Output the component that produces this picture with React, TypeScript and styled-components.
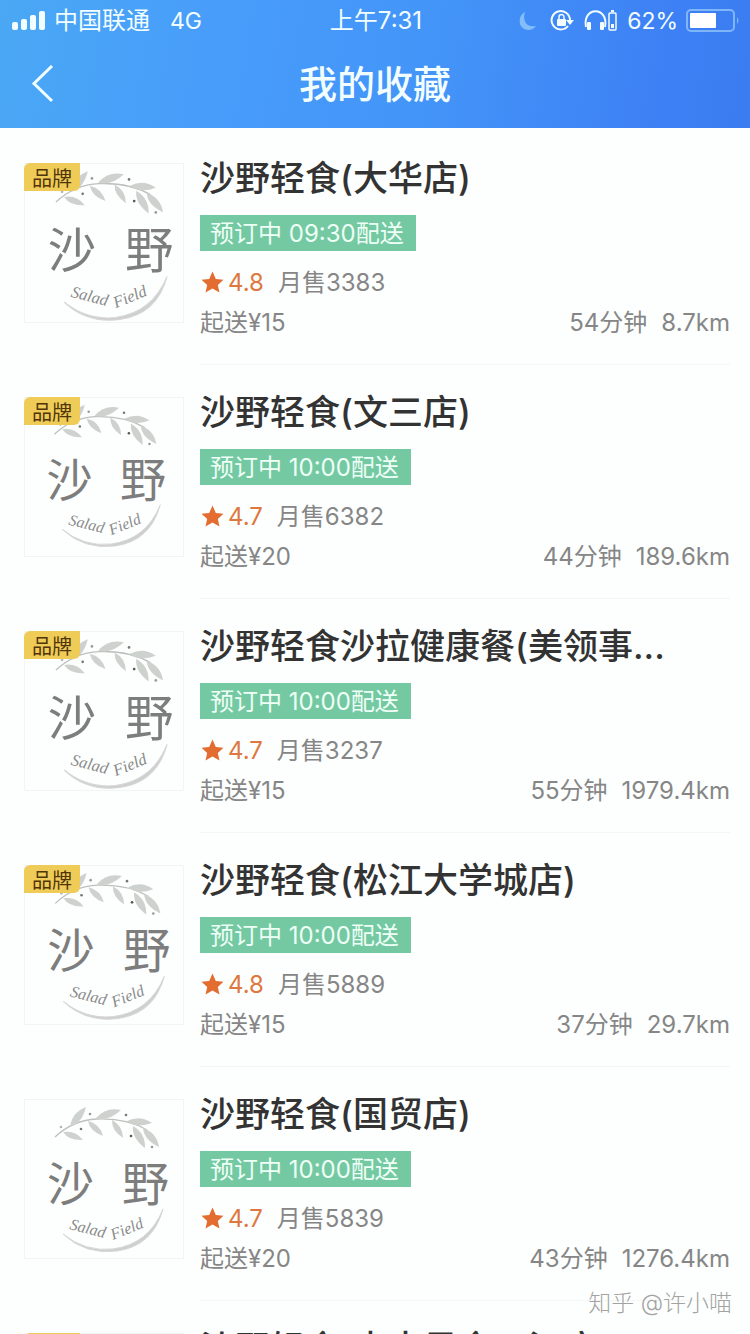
import React from "react";
import styled, { createGlobalStyle } from "styled-components";

const GlobalStyle = createGlobalStyle`
  * { box-sizing: border-box; }
  html, body, #root { height: 100%; }
  body {
    margin: 0;
    background: #fdfffe;
    font-family: Inter, "Noto Sans CJK SC", sans-serif;
    color: #333;
  }
`;

const Screen = styled.div`
  position: relative;
  height: 100%;
  overflow: hidden;
`;

const Header = styled.header`
  background: linear-gradient(100deg, #4aa8f4 0%, #489dfa 28%, #4394f8 58%, #3d80f5 88%, #3b7df0 100%);
  color: #f2fdff;
`;

const StatusBar = styled.div`
  display: grid;
  grid-template-columns: 1fr auto 1fr;
  align-items: center;
  height: 40px;
  padding: 2px 10px 0 12px;
  font-size: 24px;
  line-height: 32px;
`;

const StatusGroup = styled.div<{ $end?: boolean }>`
  display: flex;
  align-items: center;
  gap: 8px;
  justify-content: ${(p) => (p.$end ? "flex-end" : "flex-start")};
`;

const Network = styled.span`
  margin-left: 12px;
  font-size: 23px;
`;

const Percent = styled.span`
  font-size: 23px;
`;

const TitleBar = styled.div`
  display: grid;
  grid-template-columns: 72px 1fr 72px;
  align-items: center;
  height: 88px;
`;

const BackButton = styled.button`
  display: flex;
  align-items: center;
  height: 88px;
  padding: 0 0 0 30px;
  border: 0;
  background: none;
  color: inherit;
`;

const PageTitle = styled.h1`
  margin: 0;
  text-align: center;
  font-size: 38px;
  line-height: 48px;
  font-weight: 500;
`;

const List = styled.ul`
  margin: 0;
  padding: 3px 0 0;
  list-style: none;
`;

const Row = styled.li`
  display: flex;
  gap: 16px;
  height: 234px;
  padding: 32px 20px 0 24px;
`;

const Thumb = styled.div`
  position: relative;
  flex: none;
  width: 160px;
  height: 160px;
  border: 1px solid #f3f5f4;
`;

const BrandTag = styled.span`
  position: absolute;
  top: -1px;
  left: -1px;
  width: 56px;
  height: 28px;
  padding-top: 2px;
  border-radius: 6px 0 6px 0;
  background: #efcb58;
  color: #4f3508;
  font-size: 20px;
  line-height: 28px;
  text-align: center;
`;

const Info = styled.div`
  display: flex;
  flex: 1;
  flex-direction: column;
  align-items: flex-start;
  min-width: 0;
  border-bottom: 1px solid #f4f5f5;
`;

const ShopName = styled.h2`
  margin: -11px 0 0;
  font-size: 35px;
  line-height: 52px;
  font-weight: 500;
  white-space: nowrap;
`;

const Booking = styled.span`
  height: 36px;
  margin-top: 11px;
  padding: 2px 12px 0 10px;
  background: #74c9a3;
  color: #eefff6;
  font-size: 24px;
  line-height: 34px;
`;

const Rating = styled.div`
  display: flex;
  align-items: center;
  margin-top: 16px;
  color: #868686;
  font-size: 24px;
  line-height: 32px;
`;

const Score = styled.span`
  margin: 0 14px 0 3px;
  color: #dd7840;
`;

const Meta = styled.div`
  display: flex;
  width: 100%;
  justify-content: space-between;
  margin-top: 8px;
  color: #868686;
  font-size: 24px;
  line-height: 32px;
`;

const Distance = styled.span`
  margin-left: 14px;
`;

const Watermark = styled.div`
  position: absolute;
  right: 18px;
  bottom: 15px;
  color: #a3a3a3;
  font-size: 23px;
  line-height: 32px;
  font-weight: 300;
  text-shadow: 1px 1px 0 #fff;
`;

/* Each leaf runs from its base (x1, y1) to its tip (x2, y2). */
const leaves = [
  [45, 27, 61, 7],
  [38, 32, 58, 40],
  [71, 18, 96, 10],
  [63, 21, 78, 36],
  [87, 20, 98, 38],
  [102, 21, 127, 23],
  [108, 26, 120, 48],
  [118, 28, 134, 47],
];

function leafPath([x1, y1, x2, y2]: number[]) {
  const dx = x2 - x1;
  const dy = y2 - y1;
  const a = `${x1 + dx * 0.4 - dy * 0.28} ${y1 + dy * 0.4 + dx * 0.28}`;
  const b = `${x1 + dx * 0.5 + dy * 0.3} ${y1 + dy * 0.5 - dx * 0.3}`;
  return `M${x1} ${y1}Q${a} ${x2} ${y2}Q${b} ${x1} ${y1}Z`;
}

const dots = [
  [36, 27, "#b5b5b5"],
  [56, 29, "#777"],
  [65, 14, "#999"],
  [101, 15, "#777"],
  [106, 36, "#555"],
  [127, 47, "#999"],
] as const;

function ShopLogo({ scale }: { scale: number }) {
  return (
    <svg width="158" height="158" viewBox="0 0 158 158" role="img" aria-label="沙野 Salad Field">
      <g transform={`scale(${scale})`}>
        <path d="M30 37Q48 20 72 19Q102 18 122 30" fill="none" stroke="#bcc1be" strokeWidth="1.3" />
        {leaves.map((l, i) => (
          <path key={i} d={leafPath(l)} fill="#cdd2cf" />
        ))}
        {dots.map(([x, y, c], i) => (
          <circle key={i} cx={x} cy={y} r="1.3" fill={c} />
        ))}
        <g fill="#7d7d7d" fontFamily='"Liberation Serif", "Noto Sans CJK SC", serif' fontSize="47">
          <text x="22" y="101">沙</text>
          <text x="97" y="101">野</text>
        </g>
        <path d="M38 134Q60 152 88 149Q124 144 138 109Q128 146 92 151Q60 155 38 134Z" fill="#cfcfcf" stroke="#d6d6d6" />
        <g fill="#8a8a8a" fontFamily='"Liberation Serif", serif' fontStyle="italic" fontSize="16">
          <text transform="translate(44 129) rotate(14)">Salad</text>
          <text transform="translate(88 140) rotate(-22)">Field</text>
        </g>
      </g>
    </svg>
  );
}

function StarIcon() {
  return (
    <svg width="25" height="24" viewBox="0 0 25 24" aria-hidden="true">
      <path d="M12.5 .5L15.8 8L23.5 8.8L17.8 14L19.5 21.5L12.5 17.6L5.5 21.5L7.2 14L1.5 8.8L9.2 8Z" fill="#e36c31" />
    </svg>
  );
}

const shops = [
  { name: "沙野轻食(大华店)", time: "09:30", score: "4.8", sold: 3383, min: 15, eta: 54, km: "8.7", brand: true, scale: 1.03 },
  { name: "沙野轻食(文三店)", time: "10:00", score: "4.7", sold: 6382, min: 20, eta: 44, km: "189.6", brand: true, scale: 0.98 },
  { name: "沙野轻食沙拉健康餐(美领事...", time: "10:00", score: "4.7", sold: 3237, min: 15, eta: 55, km: "1979.4", brand: true, scale: 1.03 },
  { name: "沙野轻食(松江大学城店)", time: "10:00", score: "4.8", sold: 5889, min: 15, eta: 37, km: "29.7", brand: true, scale: 1.01 },
  { name: "沙野轻食(国贸店)", time: "10:00", score: "4.7", sold: 5839, min: 20, eta: 43, km: "1276.4", brand: false, scale: 1 },
  { name: "沙野轻食(中大星食一江店)", time: "10:00", score: "4.7", sold: 3120, min: 20, eta: 45, km: "190.2", brand: true, scale: 1 },
];

export default function App() {
  return (
    <Screen>
      <GlobalStyle />
      <Header>
        <StatusBar>
          <StatusGroup>
            <svg width="34" height="20" viewBox="0 0 34 20" fill="currentColor" aria-hidden="true">
              <rect x="0" y="11" width="6" height="8" rx="2" />
              <rect x="9" y="8" width="6" height="11" rx="2" />
              <rect x="18" y="4" width="6" height="15" rx="2" />
              <rect x="27" y="0" width="6" height="19" rx="2" />
            </svg>
            <span>中国联通</span>
            <Network>4G</Network>
          </StatusGroup>
          <span>上午7:31</span>
          <StatusGroup $end>
            <svg width="102" height="24" viewBox="0 0 102 24" fill="none" stroke="currentColor" aria-hidden="true">
              <path d="M8 3C5 12 10 19 19 17C15 23 5 22 3 15C2 9 4 5 8 3Z" fill="#83bdfa" stroke="none" />
              <path d="M51 17A9.2 9.2 0 1 1 53 11" strokeWidth="2" />
              <path d="M49 11H57L53 16Z" fill="currentColor" stroke="none" />
              <rect x="40" y="10" width="9" height="7" rx="1" fill="currentColor" stroke="none" />
              <path d="M42 10V8A2.5 2.5 0 0 1 47 8V10" strokeWidth="1.5" />
              <path d="M69 18C65 -3 92 -3 88 18" strokeWidth="2" />
              <rect x="70" y="13" width="4" height="8" rx="1" fill="currentColor" stroke="none" />
              <rect x="83" y="13" width="4" height="8" rx="1" fill="currentColor" stroke="none" />
              <rect x="92" y="4" width="7" height="17" rx="1" strokeWidth="1.5" />
              <path d="M94 2H97" strokeWidth="2" />
              <rect x="94" y="15" width="3" height="4" fill="currentColor" stroke="none" />
            </svg>
            <Percent>62%</Percent>
            <svg width="54" height="24" viewBox="0 0 54 24" aria-hidden="true">
              <rect x="1" y="1" width="47" height="21" rx="4" fill="none" stroke="#7fb6fa" strokeWidth="2" />
              <rect x="4" y="4" width="26" height="15" rx="1" fill="#fff" />
              <path d="M51 8Q54 11.5 51 15Z" fill="#7fb6fa" />
            </svg>
          </StatusGroup>
        </StatusBar>
        <TitleBar>
          <BackButton aria-label="返回">
            <svg width="24" height="38" viewBox="0 0 24 38" fill="none" stroke="currentColor" strokeWidth="3" aria-hidden="true">
              <path d="M22 1L4 18.5L22 36" />
            </svg>
          </BackButton>
          <PageTitle>我的收藏</PageTitle>
        </TitleBar>
      </Header>
      <List>
        {shops.map((s) => (
          <Row key={s.name}>
            <Thumb>
              <ShopLogo scale={s.scale} />
              {s.brand && <BrandTag>品牌</BrandTag>}
            </Thumb>
            <Info>
              <ShopName>{s.name}</ShopName>
              <Booking>预订中 {s.time}配送</Booking>
              <Rating>
                <StarIcon />
                <Score>{s.score}</Score>
                <span>月售{s.sold}</span>
              </Rating>
              <Meta>
                <span>起送¥{s.min}</span>
                <span>
                  {s.eta}分钟<Distance>{s.km}km</Distance>
                </span>
              </Meta>
            </Info>
          </Row>
        ))}
      </List>
      <Watermark>知乎 @许小喵</Watermark>
    </Screen>
  );
}
